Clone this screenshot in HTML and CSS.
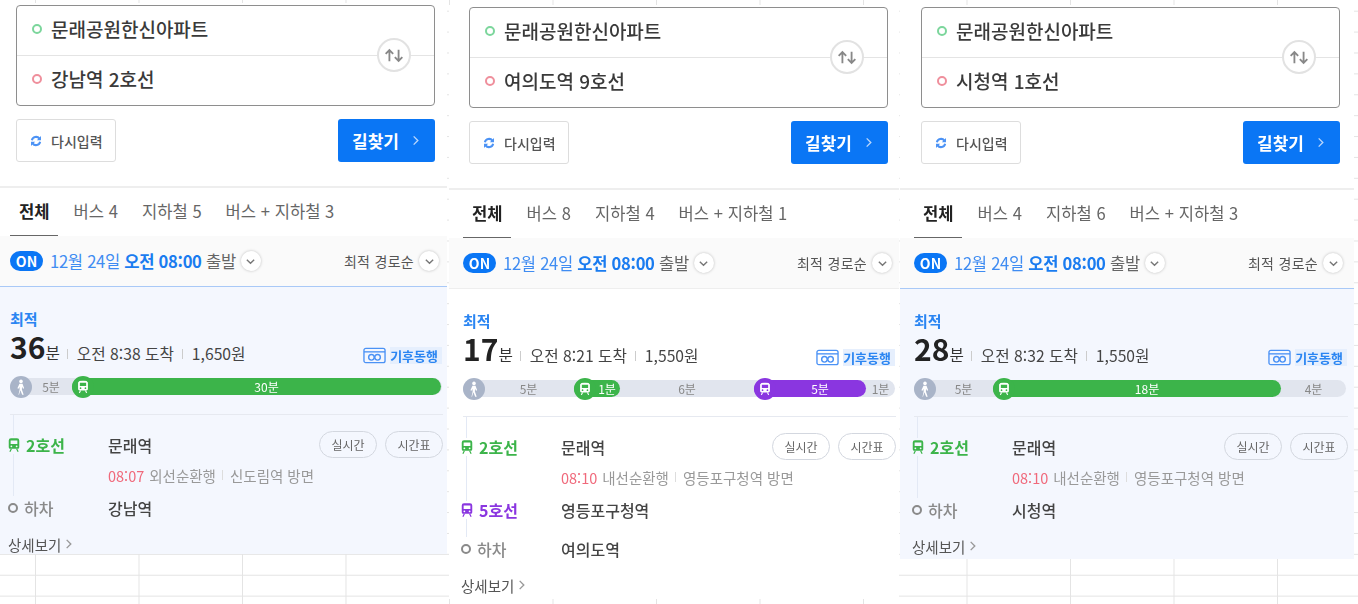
FILE: index.html
```html
<!DOCTYPE html>
<html lang="ko">
  <head>
    <meta charset="UTF-8" />
    <meta name="viewport" content="width=device-width, initial-scale=1.0" />
    <title>길찾기</title>
    <link rel="stylesheet" href="styles.css">
  </head>
  <body>
    <svg class="icon-defs" width="0" height="0" aria-hidden="true">
      <symbol id="i-train" viewBox="0 0 16 20">
        <path fill="currentColor" fill-rule="evenodd" d="M4 1h8a3 3 0 0 1 3 3v9a2 2 0 0 1-2 2H3a2 2 0 0 1-2-2V4a3 3 0 0 1 3-3zM3.500 4v4.500h9V4zM4.500 10.500a1.200 1.200 0 1 0 0 2.400 1.200 1.200 0 0 0 0-2.400zM11.500 10.500a1.200 1.200 0 1 0 0 2.400 1.200 1.200 0 0 0 0-2.400z"/>
        <path fill="none" stroke="currentColor" stroke-width="1.600" d="M4.500 15 2.500 19M11.500 15l2 4"/>
      </symbol>
      <symbol id="i-walk" viewBox="0 0 20 20">
        <circle cx="10" cy="3.800" r="2" fill="currentColor"/>
        <path fill="currentColor" d="M8.300 6.500h3.400l1.800 5-1.300.5-1-2.300-.2 3 2 5.800h-1.700l-2-4.800-1.500 4.800H7.200l1.300-5.800-.2-3-1 2.300-1.300-.5z"/>
      </symbol>
      <symbol id="i-chevron-down" viewBox="0 0 12 12">
        <path fill="none" stroke="currentColor" stroke-width="1.500" d="M2 4l4 4 4-4"/>
      </symbol>
      <symbol id="i-chevron-right" viewBox="0 0 12 12">
        <path fill="none" stroke="currentColor" stroke-width="1.500" d="M4 1.500 8.500 6 4 10.500"/>
      </symbol>
      <symbol id="i-swap" viewBox="0 0 24 20">
        <path fill="none" stroke="currentColor" stroke-width="2.200" d="M6.500 17V4M2 8l4.500-4.500L11 8M17.500 3v13M13 12l4.500 4.500L22 12"/>
      </symbol>
      <symbol id="i-refresh" viewBox="0 0 14 14">
        <path fill="none" stroke="currentColor" stroke-width="2.400" d="M2.200 6.200A4.900 4.900 0 0 1 11 4.300M11.800 7.800A4.900 4.900 0 0 1 3 9.700"/>
        <path fill="currentColor" d="M12.800 1.200v4.800H8zM1.200 12.800V8H6z"/>
      </symbol>
      <symbol id="i-card" viewBox="0 0 24 17">
        <rect x="1" y="1" width="22" height="15" rx="2" fill="none" stroke="currentColor" stroke-width="1.400"/>
        <path stroke="currentColor" stroke-width="1.400" d="M1 4.700h22"/>
        <circle cx="8.800" cy="10.400" r="2.900" fill="none" stroke="currentColor" stroke-width="1.500"/>
        <circle cx="15.200" cy="10.400" r="2.900" fill="none" stroke="currentColor" stroke-width="1.500"/>
      </symbol>
    </svg>

    <div class="sheet">
      <section class="panel panel-first">
        <div class="search">
          <div class="search-box">
            <div class="search-row"><span class="dot dot-start"></span>문래공원한신아파트</div>
            <div class="search-row"><span class="dot dot-end"></span>강남역 2호선</div>
            <span class="swap"><svg><use href="#i-swap"/></svg></span>
          </div>
          <div class="search-actions">
            <button class="reset-button"><svg><use href="#i-refresh"/></svg>다시입력</button>
            <button class="find-button">길찾기<svg><use href="#i-chevron-right"/></svg></button>
          </div>
        </div>
        <nav class="tabs">
          <a class="tab tab-active">전체</a>
          <a class="tab">버스 4</a>
          <a class="tab">지하철 5</a>
          <a class="tab">버스 + 지하철 3</a>
        </nav>
        <div class="filter">
          <span class="on-pill">ON</span>
          <span class="filter-date">12월 24일 <b>오전 08:00</b> <em>출발</em></span>
          <span class="round-chevron"><svg><use href="#i-chevron-down"/></svg></span>
          <span class="filter-sort">최적 경로순</span>
          <span class="round-chevron"><svg><use href="#i-chevron-down"/></svg></span>
        </div>
        <div class="route route-best">
          <div class="route-tag">최적</div>
          <div class="summary">
            <span class="summary-time"><b>36</b>분</span>
            <span class="summary-item">오전 8:38 도착</span>
            <span class="summary-item">1,650원</span>
            <span class="climate"><svg><use href="#i-card"/></svg><span>기후동행</span></span>
          </div>
          <div class="bar">
            <div class="seg seg-walk" style="width: 62px"><svg class="seg-icon"><use href="#i-walk"/></svg>5분</div>
            <div class="seg seg-line2 seg-ride" style="width: 369px"><svg class="seg-icon"><use href="#i-train"/></svg>30분</div>
          </div>
          <div class="steps">
            <div class="step step-first">
              <span class="step-label line2"><svg><use href="#i-train"/></svg>2호선</span>
              <span class="step-name">문래역</span>
              <span class="step-buttons"><span class="pill">실시간</span><span class="pill">시간표</span></span>
            </div>
            <div class="step-sub"><span class="arrive">08:07</span> 외선순환행<i></i>신도림역 방면</div>
            <div class="step step-next">
              <span class="step-label step-off"><span class="off-dot"></span>하차</span>
              <span class="step-name">강남역</span>
            </div>
          </div>
          <a class="more">상세보기<svg><use href="#i-chevron-right"/></svg></a>
        </div>
      </section>

      <section class="panel panel-second">
        <div class="search">
          <div class="search-box">
            <div class="search-row"><span class="dot dot-start"></span>문래공원한신아파트</div>
            <div class="search-row"><span class="dot dot-end"></span>여의도역 9호선</div>
            <span class="swap"><svg><use href="#i-swap"/></svg></span>
          </div>
          <div class="search-actions">
            <button class="reset-button"><svg><use href="#i-refresh"/></svg>다시입력</button>
            <button class="find-button">길찾기<svg><use href="#i-chevron-right"/></svg></button>
          </div>
        </div>
        <nav class="tabs">
          <a class="tab tab-active">전체</a>
          <a class="tab">버스 8</a>
          <a class="tab">지하철 4</a>
          <a class="tab">버스 + 지하철 1</a>
        </nav>
        <div class="filter">
          <span class="on-pill">ON</span>
          <span class="filter-date">12월 24일 <b>오전 08:00</b> <em>출발</em></span>
          <span class="round-chevron"><svg><use href="#i-chevron-down"/></svg></span>
          <span class="filter-sort">최적 경로순</span>
          <span class="round-chevron"><svg><use href="#i-chevron-down"/></svg></span>
        </div>
        <div class="route">
          <div class="route-tag">최적</div>
          <div class="summary">
            <span class="summary-time"><b>17</b>분</span>
            <span class="summary-item">오전 8:21 도착</span>
            <span class="summary-item">1,550원</span>
            <span class="climate"><svg><use href="#i-card"/></svg><span>기후동행</span></span>
          </div>
          <div class="bar">
            <div class="seg seg-walk" style="width: 111px"><svg class="seg-icon"><use href="#i-walk"/></svg>5분</div>
            <div class="seg seg-line2 seg-ride" style="width: 46px"><svg class="seg-icon"><use href="#i-train"/></svg>1분</div>
            <div class="seg" style="width: 134px">6분</div>
            <div class="seg seg-line5 seg-ride" style="width: 112px"><svg class="seg-icon"><use href="#i-train"/></svg>5분</div>
            <div class="seg" style="width: 29px">1분</div>
          </div>
          <div class="steps">
            <div class="step step-first">
              <span class="step-label line2"><svg><use href="#i-train"/></svg>2호선</span>
              <span class="step-name">문래역</span>
              <span class="step-buttons"><span class="pill">실시간</span><span class="pill">시간표</span></span>
            </div>
            <div class="step-sub"><span class="arrive">08:10</span> 내선순환행<i></i>영등포구청역 방면</div>
            <div class="step step-next">
              <span class="step-label line5"><svg><use href="#i-train"/></svg>5호선</span>
              <span class="step-name">영등포구청역</span>
            </div>
            <div class="step step-last">
              <span class="step-label step-off"><span class="off-dot"></span>하차</span>
              <span class="step-name">여의도역</span>
            </div>
          </div>
          <a class="more">상세보기<svg><use href="#i-chevron-right"/></svg></a>
        </div>
      </section>

      <section class="panel panel-third">
        <div class="search">
          <div class="search-box">
            <div class="search-row"><span class="dot dot-start"></span>문래공원한신아파트</div>
            <div class="search-row"><span class="dot dot-end"></span>시청역 1호선</div>
            <span class="swap"><svg><use href="#i-swap"/></svg></span>
          </div>
          <div class="search-actions">
            <button class="reset-button"><svg><use href="#i-refresh"/></svg>다시입력</button>
            <button class="find-button">길찾기<svg><use href="#i-chevron-right"/></svg></button>
          </div>
        </div>
        <nav class="tabs">
          <a class="tab tab-active">전체</a>
          <a class="tab">버스 4</a>
          <a class="tab">지하철 6</a>
          <a class="tab">버스 + 지하철 3</a>
        </nav>
        <div class="filter">
          <span class="on-pill">ON</span>
          <span class="filter-date">12월 24일 <b>오전 08:00</b> <em>출발</em></span>
          <span class="round-chevron"><svg><use href="#i-chevron-down"/></svg></span>
          <span class="filter-sort">최적 경로순</span>
          <span class="round-chevron"><svg><use href="#i-chevron-down"/></svg></span>
        </div>
        <div class="route route-best">
          <div class="route-tag">최적</div>
          <div class="summary">
            <span class="summary-time"><b>28</b>분</span>
            <span class="summary-item">오전 8:32 도착</span>
            <span class="summary-item">1,550원</span>
            <span class="climate"><svg><use href="#i-card"/></svg><span>기후동행</span></span>
          </div>
          <div class="bar">
            <div class="seg seg-walk" style="width: 79px"><svg class="seg-icon"><use href="#i-walk"/></svg>5분</div>
            <div class="seg seg-line2 seg-ride" style="width: 288px"><svg class="seg-icon"><use href="#i-train"/></svg>18분</div>
            <div class="seg" style="width: 65px">4분</div>
          </div>
          <div class="steps">
            <div class="step step-first">
              <span class="step-label line2"><svg><use href="#i-train"/></svg>2호선</span>
              <span class="step-name">문래역</span>
              <span class="step-buttons"><span class="pill">실시간</span><span class="pill">시간표</span></span>
            </div>
            <div class="step-sub"><span class="arrive">08:10</span> 내선순환행<i></i>영등포구청역 방면</div>
            <div class="step step-next">
              <span class="step-label step-off"><span class="off-dot"></span>하차</span>
              <span class="step-name">시청역</span>
            </div>
          </div>
          <a class="more">상세보기<svg><use href="#i-chevron-right"/></svg></a>
        </div>
      </section>
    </div>
  </body>
</html>
```

FILE: styles.css
```css
* {
  box-sizing: border-box;
}
html,
body {
  height: 100%;
}
body {
  margin: 0;
  overflow: hidden;
  font-family: "Noto Sans CJK KR", "Noto Sans", sans-serif;
  color: #333;
  background-color: #fff;
  /* spreadsheet cells behind the pasted screenshots */
  background-image: linear-gradient(#e4e4e4 1px, transparent 1px), linear-gradient(90deg, #e4e4e4 1px, transparent 1px);
  background-size: 100% 20.9px, 103.5px 100%;
  background-position: 0 10.7px, 35px 0;
}
.icon-defs {
  position: absolute;
}
svg {
  display: block;
}
.sheet {
  display: flex;
  align-items: flex-start;
}
.panel {
  --pl: 0px;
  --search-pl: 16px;
  --route-pr: 4px;
  --filter-pr: 8px;
  --route-bg: #fff;
  background: #fff;
  filter: blur(0.45px);
}
.panel-first {
  width: 447px;
  margin: 3px 2px 0 0;
}
.panel-first .route {
  padding-bottom: 2px;
}
.panel-second {
  width: 450px;
  margin: 5px 1px 0 0;
  --pl: 4px;
  --search-pl: 20px;
  --route-pr: 3px;
  --filter-pr: 7px;
}
.panel-second .route {
  padding-bottom: 6px;
}
.panel-third {
  width: 454px;
  margin-top: 5px;
  --pl: 4px;
  --search-pl: 21px;
  --route-pr: 6px;
  --filter-pr: 11px;
}
.panel-third .route {
  padding-bottom: 5px;
}

/* search form */
.search {
  padding: 2px 0 24px var(--search-pl);
  border-bottom: 2px solid #eee;
}
.search-box {
  position: relative;
  width: 419px;
  height: 101px;
  border: 1px solid #8e8e8e;
  border-radius: 4px;
}
.search-row {
  display: flex;
  align-items: center;
  height: 50px;
  padding: 0 0 4px 15px;
  font-size: 19px;
  font-weight: 500;
  line-height: 1;
  color: #3a3a3a;
}
.search-row:first-child {
  height: 49px;
}
.search-row + .search-row {
  border-top: 1px solid #e4e4e4;
}
.dot {
  width: 10px;
  height: 10px;
  margin-right: 9px;
  border: 2px solid #7cd69c;
  border-radius: 50%;
}
.dot-end {
  border-color: #ef8f9c;
}
.swap {
  position: absolute;
  top: 32px;
  right: 23px;
  display: flex;
  align-items: center;
  justify-content: center;
  width: 34px;
  height: 34px;
  background: #fff;
  border: 2px solid #e2e2e2;
  border-radius: 50%;
  color: #888;
}
.swap svg {
  width: 20px;
  height: 17px;
}
.search-actions {
  display: flex;
  justify-content: space-between;
  width: 419px;
  margin-top: 13px;
}
.reset-button {
  display: flex;
  align-items: center;
  width: 100px;
  height: 43px;
  padding: 0 0 0 13px;
  font: 500 14px "Noto Sans CJK KR", sans-serif;
  color: #555;
  background: #fff;
  border: 1px solid #ddd;
  border-radius: 3px;
}
.reset-button svg {
  width: 12px;
  height: 12px;
  margin-right: 9px;
  color: #4b92f5;
}
.find-button {
  display: flex;
  align-items: center;
  justify-content: center;
  width: 97px;
  height: 43px;
  padding: 0;
  font: bold 17px "Noto Sans CJK KR", sans-serif;
  color: #fff;
  background: #0a76f5;
  border: 0;
  border-radius: 3px;
}
.find-button svg {
  width: 11px;
  height: 11px;
  margin-left: 11px;
  color: #b9d6fb;
}

/* tabs */
.tabs {
  display: flex;
  gap: 24px;
  height: 48px;
  padding-left: calc(var(--pl) + 19px);
  font-size: 16.6px;
  color: #666;
}
.tab {
  position: relative;
  line-height: 47px;
}
.tab-active {
  font-weight: bold;
  color: #222;
}
.tab-active::after {
  content: "";
  position: absolute;
  left: -9px;
  right: -8px;
  bottom: 0;
  height: 1px;
  background: #666;
}

/* date + sort bar */
.filter {
  display: flex;
  align-items: center;
  height: 50px;
  padding-left: calc(var(--pl) + 10px);
  padding-right: var(--filter-pr);
  background: #fafafa;
}
.on-pill {
  width: 33px;
  height: 20px;
  margin-right: 7px;
  font-size: 14px;
  font-weight: bold;
  line-height: 20px;
  text-align: center;
  color: #fff;
  background: #0a76f5;
  border-radius: 10px;
}
.filter-date {
  font-size: 16.6px;
  line-height: 24px;
  letter-spacing: -0.3px;
  color: #3f8cf2;
}
.filter-date b {
  color: #1a7cf0;
}
.filter-date em {
  font-style: normal;
  color: #666;
}
.round-chevron {
  display: flex;
  align-items: center;
  justify-content: center;
  width: 20px;
  height: 20px;
  margin-left: 5px;
  background: #fff;
  border-radius: 50%;
  box-shadow: 0 0 3px rgba(0, 0, 0, 0.25);
  color: #777;
}
.round-chevron svg {
  width: 11px;
  height: 11px;
}
.filter-sort {
  margin-left: auto;
  font-size: 14px;
  letter-spacing: 0.3px;
  color: #555;
}

/* route card */
.route {
  padding-left: calc(var(--pl) + 10px);
  padding-right: var(--route-pr);
  background: var(--route-bg);
  border-top: 1px solid #eee;
}
.route-best {
  --route-bg: #f4f7fe;
  border-top-color: #a9c9f7;
}
.route-tag {
  padding-top: 22px;
  font-size: 15px;
  font-weight: bold;
  line-height: 20px;
  color: #2a85f2;
}
.summary {
  display: flex;
  align-items: baseline;
  height: 37px;
  padding-top: 2px;
  font-size: 15.7px;
  line-height: 30px;
  color: #444;
}
.summary-time {
  margin-right: 7px;
  color: #333;
}
.summary-time b {
  font-size: 30px;
  color: #222;
}
.summary-item {
  display: flex;
  align-items: center;
}
.summary-item::before {
  content: "";
  width: 1px;
  height: 10px;
  margin-right: 9px;
  background: #ccc;
}
.summary-item + .summary-item::before {
  margin-left: 8px;
}
.climate {
  display: flex;
  align-items: center;
  align-self: flex-end;
  margin: 0 1px 2px auto;
  font-size: 13px;
  line-height: 17px;
  font-weight: bold;
  color: #2a85f2;
}
.climate svg {
  width: 23px;
  height: 17px;
  margin-right: 4px;
  color: #4b92f5;
}
.climate span {
  background: #e6effd;
  padding-right: 4px;
}

/* segmented time bar */
.bar {
  display: flex;
  width: 432px;
  height: 17px;
  margin-top: 12px;
  background: #e1e5ee;
  border-radius: 9px;
  font-size: 12px;
  line-height: 17px;
  text-align: center;
  color: #888;
}
.seg {
  position: relative;
}
.seg-walk,
.seg-ride {
  padding-left: 20px;
}
.seg-ride {
  color: #fff;
  border-radius: 9px;
}
.seg-line2 {
  background: #3cb44a;
}
.seg-line5 {
  background: #8a36e0;
}
.seg-icon {
  position: absolute;
  top: -2.5px;
  left: 0;
  width: 22px;
  height: 22px;
  padding: 4px;
  color: #fff;
  border-radius: 50%;
}
.seg-walk .seg-icon {
  padding: 2px;
  background: #a9b4c8;
}
.seg-line2 .seg-icon {
  background: #3cb44a;
}
.seg-line5 .seg-icon {
  background: #8a36e0;
}
.bar + .steps {
  margin-top: 19px;
}

/* step list */
.steps {
  position: relative;
  padding-top: 16px;
  border-top: 1px solid #e6e9f0;
}
.steps::before {
  content: "";
  position: absolute;
  top: 0;
  bottom: 22px;
  left: 3px;
  width: 1px;
  background: #e3e9f5;
}
.step {
  position: relative;
  display: flex;
  align-items: center;
  margin-left: -2px;
  font-size: 16px;
}
.step-first {
  height: 27px;
}
.step-next {
  height: 20px;
  margin-top: 14px;
}
.step-last {
  height: 20px;
  margin-top: 19px;
}
.step-label {
  display: flex;
  align-items: center;
  width: 100px;
  font-weight: bold;
}
.step-label svg {
  width: 12px;
  height: 18px;
  margin-right: 6px;
  background: var(--route-bg);
}
.line2 {
  color: #3cb44a;
}
.line5 {
  color: #8a36e0;
}
.step-off {
  font-weight: 500;
  color: #8a8a8a;
}
.off-dot {
  width: 10px;
  height: 10px;
  margin-right: 6px;
  background: var(--route-bg);
  border: 2px solid #8a8a8a;
  border-radius: 50%;
}
.step-name {
  font-weight: 500;
  color: #444;
}
.step-buttons {
  display: flex;
  gap: 8px;
  margin-left: auto;
}
.pill {
  width: 58px;
  height: 27px;
  font-size: 12px;
  font-weight: 400;
  line-height: 25px;
  text-align: center;
  color: #666;
  border: 1px solid #d3d7df;
  border-radius: 14px;
}
.step-sub {
  display: flex;
  align-items: center;
  height: 18px;
  margin-top: 8px;
  padding-left: 98px;
  font-size: 14.5px;
  color: #999;
}
.arrive {
  margin-right: 5px;
  color: #f0697b;
}
.step-sub i {
  width: 1px;
  height: 10px;
  margin: 0 7px 0 6px;
  background: #ddd;
}
.more {
  display: flex;
  align-items: center;
  height: 16px;
  margin: 18px 0 0 -2px;
  font-size: 14.5px;
  color: #555;
}
.more svg {
  width: 11px;
  height: 12px;
  margin-left: 2px;
  color: #999;
}
```
